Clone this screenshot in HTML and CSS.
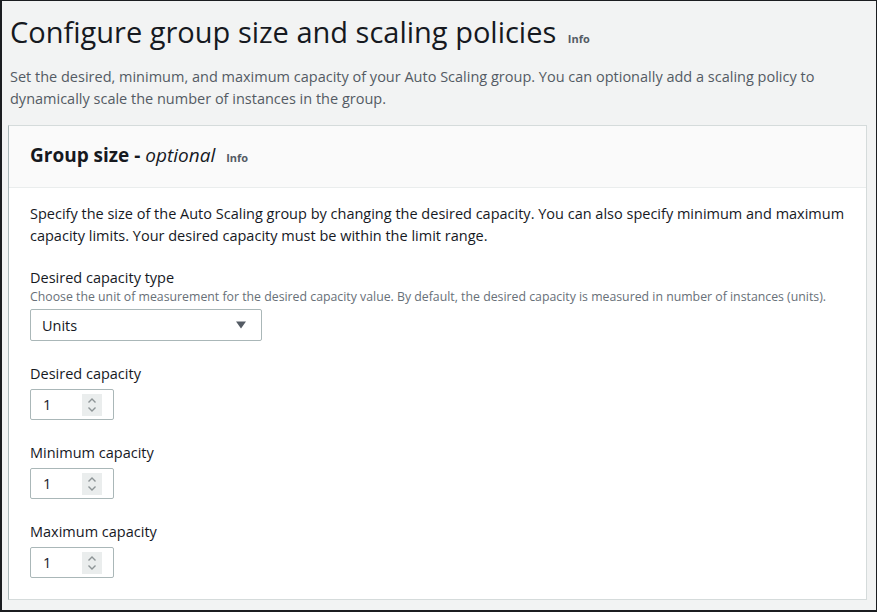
FILE: index.html
```html
<!DOCTYPE html>
<html>
<head>
<meta charset="utf-8">
<link rel="stylesheet" href="styles.css">
</head>
<body>
<div class="frame">
  <div class="page-head">
    <h1 class="title">Configure group size and scaling policies <span class="info info-lg">Info</span></h1>
    <p class="subtitle">Set the desired, minimum, and maximum capacity of your Auto Scaling group. You can optionally add a scaling policy to dynamically scale the number of instances in the group.</p>
  </div>
  <div class="card">
    <div class="card-head">
      <h2 class="card-title">Group size - <em>optional</em> <span class="info">Info</span></h2>
    </div>
    <div class="card-body">
      <p class="intro">Specify the size of the Auto Scaling group by changing the desired capacity. You can also specify minimum and maximum capacity limits. Your desired capacity must be within the limit range.</p>

      <div class="field">
        <div class="label">Desired capacity type</div>
        <div class="desc">Choose the unit of measurement for the desired capacity value. By default, the desired capacity is measured in number of instances (units).</div>
        <div class="select">
          <span>Units</span>
          <svg class="caret" width="12" height="10" viewBox="0 0 12 10"><path d="M1 1.5 H11 L6 8.5 Z" fill="#545b64"/></svg>
        </div>
      </div>

      <div class="field">
        <div class="label">Desired capacity</div>
        <div class="num">
          <span class="val">1</span>
          <span class="spin"><svg width="14" height="20" viewBox="0 0 14 20"><path d="M3.5 7.5 L7 4 L10.5 7.5" fill="none" stroke="#8d9496" stroke-width="1.4"/><path d="M3.5 12.5 L7 16 L10.5 12.5" fill="none" stroke="#8d9496" stroke-width="1.4"/></svg></span>
        </div>
      </div>

      <div class="field">
        <div class="label">Minimum capacity</div>
        <div class="num">
          <span class="val">1</span>
          <span class="spin"><svg width="14" height="20" viewBox="0 0 14 20"><path d="M3.5 7.5 L7 4 L10.5 7.5" fill="none" stroke="#8d9496" stroke-width="1.4"/><path d="M3.5 12.5 L7 16 L10.5 12.5" fill="none" stroke="#8d9496" stroke-width="1.4"/></svg></span>
        </div>
      </div>

      <div class="field">
        <div class="label">Maximum capacity</div>
        <div class="num">
          <span class="val">1</span>
          <span class="spin"><svg width="14" height="20" viewBox="0 0 14 20"><path d="M3.5 7.5 L7 4 L10.5 7.5" fill="none" stroke="#8d9496" stroke-width="1.4"/><path d="M3.5 12.5 L7 16 L10.5 12.5" fill="none" stroke="#8d9496" stroke-width="1.4"/></svg></span>
        </div>
      </div>
    </div>
  </div>
</div>
</body>
</html>
```
FILE: styles.css
```css
* { box-sizing: border-box; }
html, body { margin: 0; padding: 0; }
body {
  font-family: "Open Sans", "Noto Sans", sans-serif;
  color: #16191f;
  background: #1b1d20;
}
.frame {
  height: 612px;
  width: 877px;
  background: #f2f3f3;
  border-top: 1px solid #1b1d20;
  border-left: 2px solid #1b1d20;
  border-right: 1px solid #1b1d20;
  border-bottom: 2px solid #1b1d20;
  overflow: hidden;
}
.page-head { padding: 0 8px; }
.title {
  margin: 11px 0 0;
  font-size: 29px;
  font-weight: 400;
  line-height: 40px;
  color: #16191f;
}
.info {
  font-size: 11px;
  font-weight: 700;
  color: #545b64;
  margin-left: 6px;
}
.info-lg { margin-left: 4px; }
.subtitle {
  margin: 7px 0 0;
  font-size: 14.5px;
  line-height: 22px;
  color: #545b64;
}
.card {
  margin: 15px 9px 0 6px;
  background: #ffffff;
  border: 1px solid #d5dbdb;
  border-left-color: #aab7b8;
  height: 475px;
}
.card-head {
  height: 62px;
  background: #fafafa;
  border-bottom: 1px solid #eaeded;
  padding: 0 21px;
  display: flex;
  align-items: center;
}
.card-title {
  margin: 0;
  font-size: 19px;
  font-weight: 700;
  line-height: 24px;
}
.card-title em { font-weight: 400; }
.card-body { padding: 15px 21px; }
.intro {
  margin: 0;
  font-size: 14.5px;
  line-height: 22px;
}
.field { margin-top: 20px; }
.field + .field { margin-top: 22px; }
.label {
  font-size: 14.5px;
  line-height: 22px;
}
.desc {
  font-size: 12.3px;
  line-height: 16px;
  color: #687078;
}
.select {
  margin-top: 4px;
  width: 232px;
  height: 32px;
  border: 1px solid #aab7b8;
  border-radius: 2px;
  display: flex;
  align-items: center;
  justify-content: space-between;
  padding: 0 14px 0 11px;
  font-size: 14.5px;
}
.num {
  margin-top: 4px;
  width: 84px;
  height: 31px;
  border: 1px solid #aab7b8;
  border-radius: 2px;
  display: flex;
  align-items: center;
  padding: 0 11px 0 12px;
  font-size: 14.5px;
}
.val { flex: 1; }
.spin {
  width: 20px;
  height: 22px;
  background: #eaeded;
  display: flex;
  align-items: center;
  justify-content: center;
}
```
